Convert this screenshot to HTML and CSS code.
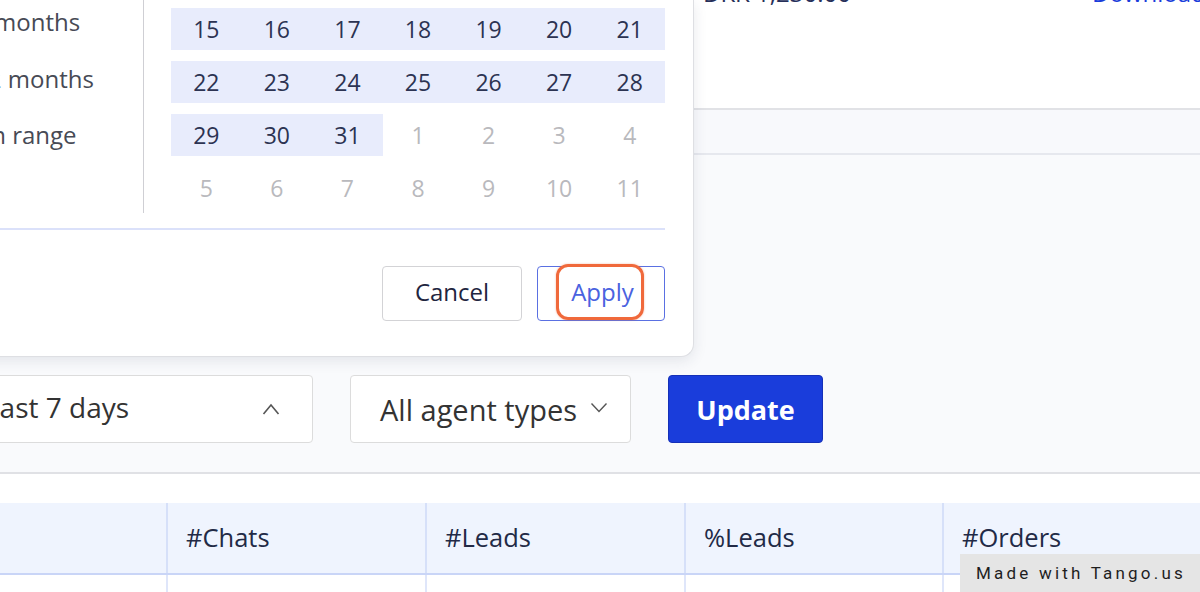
FILE: index.html
```html
<!DOCTYPE html>
<html lang="en">
<head>
<meta charset="utf-8">
<title>Agent report</title>
<link rel="stylesheet" href="styles.css">
</head>
<body>
<div class="page">
  <section class="topcard">
    <div class="invoice-row">
      <span class="cell cell-num">#10231</span>
      <span class="cell cell-date">Jan 2024</span>
      <span class="cell cell-amount">DKK 1,230.00</span>
      <a class="cell cell-link" href="#">Download</a>
    </div>
  </section>
  <div class="band"></div>

  <section class="filters">
    <div class="filter-row">
      <div class="select select-date">
        <span>Last 7 days</span>
        <svg class="chev" width="18" height="12" viewBox="0 0 18 12"><path d="M1.5 11 L9 2 L16.5 11" fill="none" stroke="#555" stroke-width="1.6"/></svg>
      </div>
      <div class="select select-agent">
        <span>All agent types</span>
        <svg class="chev" width="18" height="11" viewBox="0 0 18 11"><path d="M1.5 1.5 L9 9.5 L16.5 1.5" fill="none" stroke="#555" stroke-width="1.4"/></svg>
      </div>
      <button class="btn-update">Update</button>
    </div>
  </section>

  <section class="tablecard">
    <div class="table">
      <div class="thead">
        <div class="th th-first"></div>
        <div class="th">#Chats</div>
        <div class="th">#Leads</div>
        <div class="th">%Leads</div>
        <div class="th">#Orders</div>
      </div>
      <div class="trow">
        <div class="td td-first"></div>
        <div class="td"></div>
        <div class="td"></div>
        <div class="td"></div>
        <div class="td"></div>
      </div>
    </div>
  </section>
</div>

<div class="popup">
  <div class="popup-top">
    <ul class="presets">
      <li>Last 6 months</li>
      <li>Last 12 months</li>
      <li>Chosen range</li>
    </ul>
    <div class="calendar">
      <div class="cal-row">
        <span class="day in">15</span><span class="day in">16</span><span class="day in">17</span><span class="day in">18</span><span class="day in">19</span><span class="day in">20</span><span class="day in">21</span>
      </div>
      <div class="cal-row">
        <span class="day in">22</span><span class="day in">23</span><span class="day in">24</span><span class="day in">25</span><span class="day in">26</span><span class="day in">27</span><span class="day in">28</span>
      </div>
      <div class="cal-row">
        <span class="day in">29</span><span class="day in">30</span><span class="day in">31</span><span class="day out">1</span><span class="day out">2</span><span class="day out">3</span><span class="day out">4</span>
      </div>
      <div class="cal-row">
        <span class="day out">5</span><span class="day out">6</span><span class="day out">7</span><span class="day out">8</span><span class="day out">9</span><span class="day out">10</span><span class="day out">11</span>
      </div>
    </div>
  </div>
  <div class="popup-rule"></div>
  <div class="popup-footer">
    <button class="btn btn-cancel">Cancel</button>
    <button class="btn btn-apply">Apply<span class="focus-ring"></span></button>
  </div>
</div>

<div class="watermark">Made with Tango.us</div>
</body>
</html>
```

FILE: styles.css
```css
* { box-sizing: border-box; }
html, body { margin: 0; padding: 0; }
body {
  width: 1200px;
  height: 592px;
  overflow: hidden;
  position: relative;
  background: #f9fafc;
  font-family: "Open Sans", "Noto Sans", sans-serif;
  color: #2b3150;
}

.page { width: 1200px; }

/* top card */
.topcard {
  height: 110px;
  background: #ffffff;
  border-bottom: 2px solid #e1e2e6;
  overflow: hidden;
}
.invoice-row {
  display: grid;
  grid-template-columns: 420px 283px 389px 1fr;
  margin-top: -21px;
  font-size: 24px;
  line-height: 28px;
}
.cell { white-space: nowrap; }
.cell-amount { color: #27305a; }
.cell-link { color: #1a3ddb; text-decoration: none; }

.band {
  height: 45px;
  background: #f8f9fc;
  border-bottom: 2px solid #e6e8ee;
}

/* filters */
.filters {
  height: 319px;
  padding-top: 220px;
  border-bottom: 2px solid #e0e1e5;
  overflow: hidden;
}
.filter-row {
  display: flex;
  gap: 37px;
  margin-left: -47px;
}
.select {
  height: 68px;
  background: #fff;
  border: 1px solid #dcdcdc;
  border-radius: 4px;
  display: flex;
  align-items: center;
  justify-content: space-between;
  font-size: 28px;
  color: #333;
}
.select-date { width: 360px; padding: 0 32px 0 31px; }
.select-agent { width: 281px; padding: 0 22px 0 29px; font-size: 29px; }
.select-date span { margin-top: -4px; }
.select-agent span { margin-top: 0; }
.select-agent .chev { margin-top: -4px; }
.btn-update {
  width: 155px;
  height: 68px;
  background: #1a3ddb;
  border: 1px solid #1530b8;
  border-radius: 4px;
  color: #fff;
  font-family: "Open Sans", sans-serif;
  font-weight: 700;
  font-size: 27px;
  padding: 0;
}

/* table */
.tablecard {
  background: #fff;
  padding-top: 29px;
  height: 118px;
}
.table { margin-left: -43px; }
.thead, .trow {
  display: grid;
  grid-template-columns: 209px 259px 259px 258px 1fr;
}
.thead {
  height: 72px;
  background: #eff4fe;
  border-bottom: 2px solid #c9d5f7;
}
.th {
  display: flex;
  align-items: center;
  padding-left: 18px;
  padding-bottom: 3px;
  font-size: 25.5px;
  color: #222a46;
  border-left: 2px solid #d6e0f9;
}
.th-first, .td-first { border-left: none; }
.trow { height: 40px; }
.td { border-left: 2px solid #dfe6fa; }

/* popup */
.popup {
  position: absolute;
  left: -100px;
  top: 0;
  width: 794px;
  height: 357px;
  background: #fff;
  border: 1px solid #dedfe3;
  border-top: none;
  border-radius: 0 0 13px 13px;
  box-shadow: 0 4px 14px rgba(40, 50, 80, 0.10);
  padding: 0 28px 0 33px;
}
.popup-top {
  display: flex;
  height: 213px;
}
.presets {
  list-style: none;
  margin: 0;
  padding: 0;
  width: 210px;
  border-right: 1px solid #cfcfd4;
  font-size: 24px;
  color: #474a55;
}
.presets li {
  height: 56.5px;
  line-height: 56.5px;
  white-space: nowrap;
  position: relative;
  top: -6px;
  text-indent: -12px;
}
.calendar {
  margin-left: 27px;
  padding-top: 8px;
  width: 494px;
  display: flex;
  flex-direction: column;
  gap: 11px;
}
.cal-row {
  display: grid;
  grid-template-columns: repeat(7, 1fr);
  height: 42px;
}
.day {
  display: flex;
  align-items: center;
  justify-content: center;
  font-size: 23px;
}
.day.in { background: #e8ecfc; color: #2c3352; }
.day.out { color: #b9b9bd; }

.popup-rule {
  height: 2px;
  margin-top: 15px;
  background: #dbe1fa;
}
.popup-footer {
  display: flex;
  justify-content: flex-end;
  gap: 15px;
  padding-top: 36px;
}
.btn {
  height: 55px;
  border-radius: 4px;
  background: #fff;
  font-family: "Open Sans", sans-serif;
  font-size: 24px;
  font-weight: 500;
  padding: 0 0 4px;
}
.btn-cancel {
  width: 140px;
  border: 1px solid #d3d3d6;
  color: #1f2540;
}
.btn-apply {
  width: 128px;
  border: 1px solid #5a70e2;
  color: #4a62df;
  position: relative;
  padding-left: 3px;
}
.focus-ring {
  position: absolute;
  left: 18px;
  top: -3px;
  width: 88px;
  height: 56px;
  border: 3px solid #f0693b;
  border-radius: 12px;
  box-shadow: 0 0 2px rgba(240, 105, 59, 0.5);
}

/* watermark */
.watermark {
  position: absolute;
  right: 0;
  bottom: 0;
  width: 240px;
  height: 38px;
  background: #e5e5e5;
  color: #1e1e1e;
  font-family: "Roboto", sans-serif;
  font-size: 17px;
  letter-spacing: 3.2px;
  display: flex;
  align-items: center;
  padding-left: 16px;
}
```
